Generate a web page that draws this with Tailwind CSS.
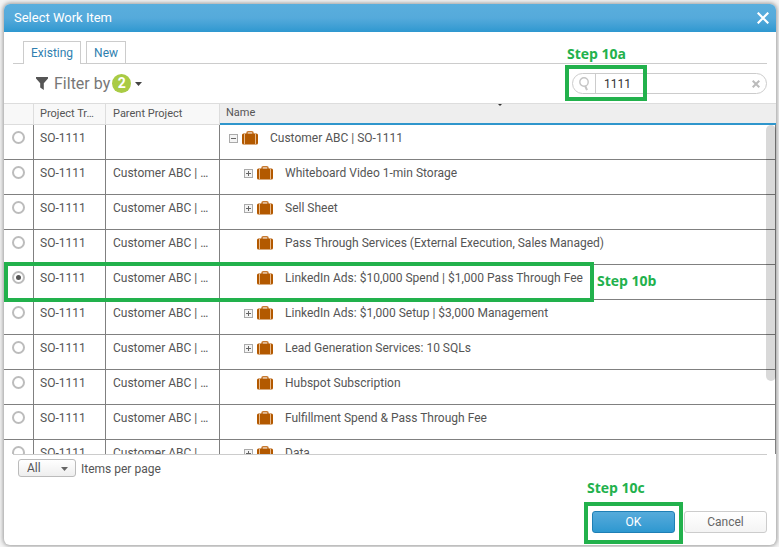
<!DOCTYPE html>
<html lang="en">
<head>
  <meta charset="UTF-8" />
  <meta name="viewport" content="width=device-width, initial-scale=1.0" />
  <title>Select Work Item</title>
  <script src="https://cdn.jsdelivr.net/npm/@tailwindcss/browser@4"></script>
</head>
<body class="bg-[#f4f4f4] h-screen p-1 pb-0.5 pr-[3px] font-['Roboto',Arial,sans-serif] text-xs text-[#555]">

  <div role="dialog" aria-labelledby="dialog-title" class="h-full flex flex-col bg-white rounded-md shadow-[0_0_4px_1px_#9a9a9a]">

    <!-- Title bar -->
    <div class="h-7 shrink-0 flex items-center justify-between pl-2.5 pr-[7px] rounded-t-md bg-linear-to-b from-[#5aaedd] via-[#55aadb] to-[#2d98d0]">
      <h1 id="dialog-title" class="text-[13px] text-white">Select Work Item</h1>
      <button aria-label="Close" class="text-white">
        <svg class="size-3" viewBox="0 0 12 12" fill="none" stroke="currentColor" stroke-width="2.2">
          <path d="M0.7 0.7l10.6 10.6M11.3 0.7L0.7 11.3" />
        </svg>
      </button>
    </div>

    <!-- Tabs -->
    <div class="mx-[9px] mt-[9px] pl-2.5 flex gap-[5px] shrink-0 border-b border-[#ccc]">
      <button class="h-[23px] -mb-px px-[7px] border border-b-0 border-[#ccc] bg-white text-[#2f7fb0]">Existing</button>
      <button class="h-[22px] px-[7px] border border-b-0 border-[#ccc] bg-white text-[#2f7fb0]">New</button>
    </div>

    <!-- Filter and search -->
    <div class="h-[39px] shrink-0 flex items-center justify-between pl-8 pr-[9px]">
      <button class="flex items-center text-base text-[#777]">
        <svg class="w-3 h-[13px] mr-1.5 text-[#555]" viewBox="0 0 12 13" fill="currentColor">
          <path d="M0 0h12v1.5L7.8 6.3V13L4.2 10.4V6.3L0 1.5z" />
        </svg>
        Filter by
        <span class="ml-0.5 size-[19px] rounded-full bg-[#a9cb44] text-white text-sm leading-[19px] font-bold">2</span>
        <svg class="ml-1 w-[7px] h-1 text-[#444]" viewBox="0 0 7 4" fill="currentColor"><path d="M0 0h7L3.5 4z" /></svg>
      </button>

      <div class="relative">
        <label class="w-[195px] h-[21px] flex items-center border border-[#ccc] rounded-full">
          <span class="w-[23px] h-full flex items-center justify-center border-r border-[#ccc]">
            <svg class="w-3 h-[14px]" viewBox="0 0 12 14" fill="none" stroke="#c4c4c4">
              <circle cx="6" cy="5" r="4.2" stroke-width="1.4" />
              <path d="M7.2 9l1.8 4.2" stroke-width="2" />
            </svg>
          </span>
          <input type="text" aria-label="Search" value="1111" class="flex-1 min-w-0 pl-2 outline-none text-[#333]" />
          <button aria-label="Clear search" class="mr-1.5 text-[#bbb]">
            <svg class="size-2" viewBox="0 0 8 8" fill="none" stroke="currentColor" stroke-width="2"><path d="M0.7 0.7l6.6 6.6M7.3 0.7L0.7 7.3" /></svg>
          </button>
        </label>
        <div class="absolute -left-[7px] -top-2 w-[82px] h-9 border-4 border-[#22b14c] pointer-events-none"></div>
        <p class="absolute -left-[5px] -top-7 font-['Open_Sans',sans-serif] text-sm leading-[18px] font-bold text-[#22b14c]">Step 10a</p>
      </div>
    </div>

    <!-- Work items -->
    <div class="relative flex-1 min-h-0 overflow-hidden">
      <table class="w-full table-fixed border-separate border-spacing-0 text-left">
        <thead>
          <tr class="h-[22px] text-[11px]">
            <th class="w-[30px] border-t border-b border-r border-[#ddd] bg-[#f8f8f8]"></th>
            <th class="w-[72px] px-1.5 border-t border-b border-r border-[#ddd] bg-[#f8f8f8] font-normal">Project Tr…</th>
            <th class="w-[114px] px-[7px] border-t border-b border-r border-[#ddd] bg-[#f8f8f8] font-normal">Parent Project</th>
            <th class="relative px-1.5 border-t border-t-[#ddd] border-b-2 border-b-[#2f96cc] bg-[#eee] font-normal">
              Name
              <svg class="absolute left-1/2 top-0 w-1 h-0.5" viewBox="0 0 4 2" fill="#333"><path d="M0 0h4L2 2z" /></svg>
            </th>
          </tr>
        </thead>
        <tbody id="work-items"></tbody>
      </table>

      <!-- Scrollbar thumb -->
      <div class="absolute right-0 top-[22px] w-[10px] h-64 rounded-full bg-black/15"></div>

      <!-- Selected row callout -->
      <div class="absolute left-0 top-[159px] w-[590px] h-[40px] border-4 border-[#22b14c] pointer-events-none"></div>
      <p class="absolute left-[593px] top-[169px] font-['Open_Sans',sans-serif] text-sm leading-[18px] font-bold text-[#22b14c]">Step 10b</p>
    </div>

    <!-- Paging -->
    <div class="mx-[9px] pt-1 pl-[5px] h-[57px] shrink-0 flex items-start gap-[5px] border-t border-[#ccc]">
      <div class="relative">
        <select id="page-size" class="appearance-none block w-[58px] h-[18px] pl-2 border border-[#bbb] rounded-[3px] bg-linear-to-b from-white to-[#eee] text-xs leading-4">
          <option>All</option>
        </select>
        <svg class="absolute right-2 top-2 w-[7px] h-1 pointer-events-none" viewBox="0 0 7 4" fill="#666"><path d="M0 0h7L3.5 4z" /></svg>
      </div>
      <label for="page-size" class="pt-0.5">Items per page</label>
    </div>

    <!-- Actions -->
    <div class="h-[34px] shrink-0 flex justify-end gap-[9px] pr-[9px]">
      <div class="relative">
        <button class="w-[83px] h-[22px] rounded-[3px] border border-[#1f7fb5] bg-linear-to-b from-[#56abdb] to-[#2d98d0] text-white">OK</button>
        <div class="absolute -left-2 -top-[9px] w-[99px] h-[42px] border-4 border-[#22b14c] pointer-events-none"></div>
        <p class="absolute -left-[5px] -top-8 whitespace-nowrap font-['Open_Sans',sans-serif] text-sm leading-[18px] font-bold text-[#22b14c]">Step 10c</p>
      </div>
      <button class="w-[83px] h-[22px] rounded-[3px] border border-[#ccc] bg-linear-to-b from-white to-[#f4f4f4] text-[#666]">Cancel</button>
    </div>
  </div>

  <script>
    const items = [
      { name: 'Customer ABC | SO-1111', toggle: 'minus', root: true },
      { name: 'Whiteboard Video 1-min Storage', toggle: 'plus' },
      { name: 'Sell Sheet', toggle: 'plus' },
      { name: 'Pass Through Services (External Execution, Sales Managed)' },
      { name: 'LinkedIn Ads: $10,000 Spend | $1,000 Pass Through Fee', selected: true },
      { name: 'LinkedIn Ads: $1,000 Setup | $3,000 Management', toggle: 'plus' },
      { name: 'Lead Generation Services: 10 SQLs', toggle: 'plus' },
      { name: 'Hubspot Subscription' },
      { name: 'Fulfillment Spend & Pass Through Fee' },
      { name: 'Data', toggle: 'plus' },
    ];

    const briefcase = `
      <svg class="w-4 h-[14px]" viewBox="0 0 16 14">
        <path d="M5 3.5V2Q5 0.8 6.2 0.8H9.8Q11 0.8 11 2V3.5" fill="none" stroke="#c87a30" stroke-width="1.5" />
        <rect y="2.5" width="16" height="11" rx="1.5" fill="#b35900" />
        <path d="M2.5 3v10M13.5 3v10" stroke="#e8b98a" stroke-width="1" />
      </svg>`;

    function toggleIcon(kind) {
      if (!kind) return '<span class="size-[9px]"></span>';
      const path = kind === 'plus' ? 'M2 4.5h5M4.5 2v5' : 'M2 4.5h5';
      return `
        <button aria-label="${kind === 'plus' ? 'Expand' : 'Collapse'}">
          <svg class="size-[9px]" viewBox="0 0 9 9" fill="#f4f4f4" stroke="#aaa">
            <rect x="0.5" y="0.5" width="8" height="8" /><path d="${path}" stroke="#666" />
          </svg>
        </button>`;
    }

    const cell = 'pt-[5px] align-top truncate border-b border-r border-[#808080]';

    document.getElementById('work-items').innerHTML = items.map((item) => `
      <tr class="h-[35px]">
        <td class="pl-2 pt-1.5 align-top border-b border-r border-[#808080]">
          <input type="radio" name="work-item" aria-label="${item.name}" ${item.selected ? 'checked' : ''}
            class="appearance-none block size-[13px] rounded-full border-2 border-[#bcbcbc] bg-white checked:bg-[#555] checked:bg-clip-content checked:p-0.5" />
        </td>
        <td class="px-1.5 ${cell}">SO-1111</td>
        <td class="px-[7px] ${cell}">${item.root ? '' : 'Customer ABC | …'}</td>
        <td class="px-1.5 ${cell}">
          <div class="flex items-center gap-3 ${item.root ? 'pl-[3px]' : 'pl-[18px]'}">
            <span class="flex items-center gap-1">${toggleIcon(item.toggle)}${briefcase}</span>
            ${item.name}
          </div>
        </td>
      </tr>`).join('');
  </script>
</body>
</html>
